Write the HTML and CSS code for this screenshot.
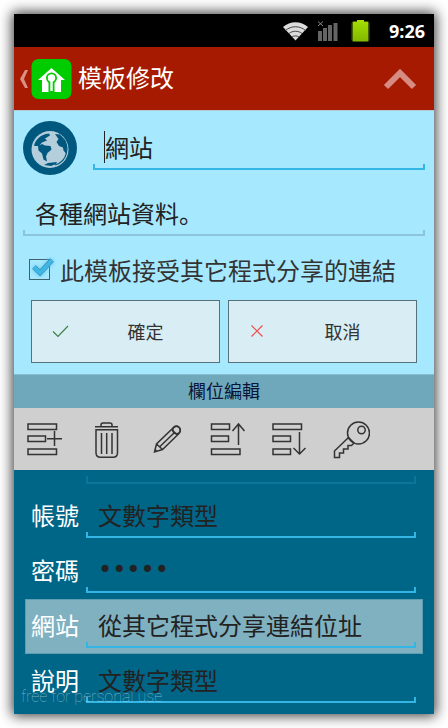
FILE: index.html
```html
<!DOCTYPE html>
<html lang="zh">
<head>
<meta charset="utf-8">
<meta name="viewport" content="width=device-width, initial-scale=1">
<title>模板修改</title>
<link rel="stylesheet" href="styles.css">
</head>
<body>
<main class="screen">
  <div class="status">
    <svg class="wifi" width="29" height="24" viewBox="0 0 29 24" aria-hidden="true">
      <path d="M14.500 21.500L2 8C9 1.500 20 1.500 27 8Z" fill="#dcdcdc"/>
      <path d="M4.500 11.500C10 6.500 19 6.500 24.500 11.500M8 14.500C11.500 11.500 17.500 11.500 21 14.500M11 18C13 16.500 16 16.500 18 18" fill="none" stroke="#444" stroke-width="1"/>
    </svg>
    <svg class="signal" width="23" height="24" viewBox="0 0 23 24" aria-hidden="true">
      <path d="M2 12h4v10h-4zM7 9h4v13h-4zM12 6h4v16h-4zM17.500 4h4v18h-4z" fill="#656565"/>
      <path d="M2 2.500l5 4.500M7 2.500l-5 4.500" stroke="#888" stroke-width="1"/>
    </svg>
    <svg class="battery" width="21" height="26" viewBox="0 0 21 26" aria-hidden="true">
      <defs><linearGradient id="charge" x1="0" y1="0" x2="0" y2="1"><stop offset="0" stop-color="#a5e000"/><stop offset="1" stop-color="#83b800"/></linearGradient></defs>
      <rect x="1.500" y="3" width="18" height="21" rx="3" fill="#466000"/>
      <path d="M7 2h7v2h4v19h-15v-19h4z" fill="url(#charge)"/>
    </svg>
    <time>9:26</time>
  </div>

  <header class="appbar">
    <button class="back" type="button" aria-label="返回">
      <svg width="10" height="20" viewBox="0 0 10 20" aria-hidden="true"><path d="M6 1h3L5 10l4 9H6L1 10z" fill="#d99186"/></svg>
    </button>
    <svg class="logo" width="41" height="42" viewBox="0 0 41 42" aria-hidden="true">
      <rect x=".5" y="1" width="40" height="40" rx="7" fill="#0c0"/>
      <path d="M20.500 10l13.500 12h-4v12h-19v-12h-4z" fill="#fff"/>
      <circle cx="20.500" cy="20" r="5.500" fill="#0c0"/>
      <path d="M17.500 23h6v11h-6z" fill="#0c0"/>
      <circle cx="20.500" cy="20" r="3.700" fill="#fff"/>
      <path d="M19.300 23h2.400v10h-2.400z" fill="#fff"/>
    </svg>
    <h1>模板修改</h1>
    <button class="collapse" type="button" aria-label="收合">
      <svg width="34" height="24" viewBox="0 0 34 24" aria-hidden="true"><path d="M3 20L17 6l14 14" fill="none" stroke="#d68c82" stroke-width="6"/></svg>
    </button>
  </header>

  <form class="form">
    <div class="name-row">
      <svg class="globe" width="54" height="54" viewBox="0 0 54 54" aria-hidden="true">
        <circle cx="27" cy="27" r="27" fill="#00587f"/>
        <circle cx="27" cy="28.500" r="18.500" fill="#b4cedb"/>
        <path d="M38 15.500A16.500 16.500 0 0 1 32 44" fill="none" stroke="#00587f" stroke-width="1.200"/>
        <path d="M11 25C12 19 17 13.500 26 12.500l1 2-5 3 2 2-5 2-3 3.500z" fill="#00587f"/>
        <path d="M15 25l4-2 3 1.500 5.500.5 1 3.500-4 3.500-1.500 3.500 1 5-3.500-2-1.500-6-3.500-3z" fill="#00587f"/>
        <path d="M32 13l5 .5 5 6 2 7-1 6-2.500-3-.5-3-4-1.500-2.500-4 2-3z" fill="#00587f"/>
        <path d="M21 44l4-2 9-1-1 2-5 2z" fill="#00587f"/>
      </svg>
      <input class="field active caret" type="text" aria-label="名稱" value="網站">
    </div>
    <input class="field idle" type="text" aria-label="說明" value="各種網站資料。">
    <label class="share">
      <span class="tick">
        <input type="checkbox" checked>
        <svg width="26" height="24" viewBox="0 0 26 24" aria-hidden="true"><path d="M4 10l6 6L22 3" fill="none" stroke="#3a83a3" stroke-width="5"/><path d="M4 10l6 6L22 3" fill="none" stroke="#3eb7e6" stroke-width="4"/></svg>
      </span>
      此模板接受其它程式分享的連結
    </label>
    <div class="actions">
      <button type="button">
        <svg width="18" height="18" viewBox="0 0 18 18" aria-hidden="true"><path d="M1 9.500l5 5L16 4" fill="none" stroke="#3d8048" stroke-width="1.200"/></svg>
        <span>確定</span>
      </button>
      <button type="button">
        <svg width="18" height="18" viewBox="0 0 18 18" aria-hidden="true"><path d="M2.500 3.500l11 11M13.500 3.500l-11 11" stroke="#ee4a4a" stroke-width="1.200"/></svg>
        <span>取消</span>
      </button>
    </div>
  </form>

  <h2 class="section">欄位編輯</h2>
  <div class="toolbar">
    <button type="button" aria-label="新增">
      <svg width="41" height="40" viewBox="0 0 41 40" aria-hidden="true"><path d="M4 5h28.500v5.500H4zM4 17h17.500v5.500H4zM4 30h28.500v5.500H4zM23 19.700h15M30.500 12v15"/></svg>
    </button>
    <button type="button" aria-label="刪除">
      <svg width="41" height="40" viewBox="0 0 41 40" aria-hidden="true"><path d="M10 7.700h23M16 7.500v-1.500q0-2 2-2h7q2 0 2 2v1.500M11 10.700h21.500v23q0 4.500-4.500 4.500h-12.500q-4.500 0-4.500-4.500zM16.500 14v21M21.700 14v21M27 14v21"/></svg>
    </button>
    <button type="button" aria-label="編輯">
      <svg width="41" height="40" viewBox="0 0 41 40" aria-hidden="true"><path d="M8.500 33l2-8 16-15.500c1.500-2 4-3 6-1.500l1 1c1.500 2 1 4.500-1 6l-16 15.500zM10.500 25l6 5.500M25.500 10.500l6.500 6M14 27.500l15-14.500M9 30.500l2 2"/><circle cx="30.500" cy="11" r="3.700"/></svg>
    </button>
    <button type="button" aria-label="上移">
      <svg width="41" height="40" viewBox="0 0 41 40" aria-hidden="true"><path d="M4.500 5h18v5.500h-18zM4.500 17h17v5.500h-17zM4.500 30h28.500v5.500h-28.500zM31.500 26v-21M25.500 12l6-7 6 7"/></svg>
    </button>
    <button type="button" aria-label="下移">
      <svg width="41" height="40" viewBox="0 0 41 40" aria-hidden="true"><path d="M5 5h28.500v5.500H5zM5 17h17.500v5.500H5zM5 30h17.500v5.500H5zM31.500 13v22M25.500 29l6 6 6-6"/></svg>
    </button>
    <button type="button" aria-label="密碼">
      <svg width="41" height="40" viewBox="0 0 41 40" aria-hidden="true"><circle cx="29.500" cy="14" r="11"/><circle cx="32.500" cy="11" r="3.700"/><path d="M19.500 18.500l6 6M19.500 18.500L5.500 32v6.500h5v-4.500h4v-4h4.500v-3.500h3.500l3-3"/></svg>
    </button>
  </div>

  <section class="list">
    <div class="row peek"></div>
    <div class="row"><label for="f1">帳號</label><input id="f1" class="field active" type="text" value="文數字類型"></div>
    <div class="row"><label for="f2">密碼</label><input id="f2" class="field active" type="password" value="12345"></div>
    <div class="row selected"><label for="f3">網站</label><input id="f3" class="field active" type="text" value="從其它程式分享連結位址"></div>
    <div class="row"><label for="f4">說明</label><input id="f4" class="field active" type="text" value="文數字類型"></div>
    <span class="watermark">free for personal use</span>
  </section>
</main>
</body>
</html>
```
FILE: styles.css
```css
* { box-sizing: border-box; }

body {
  margin: 0;
  padding: 14px;
  background: #fff;
  color: #333;
  font-family: Roboto, "Noto Sans CJK SC", sans-serif;
  font-size: 24px;
}

h1, h2 { margin: 0; font-weight: 400; }

button {
  padding: 0;
  border: 0;
  background: none;
  color: inherit;
  font: inherit;
}

svg { display: block; flex: none; }

.screen { box-shadow: 0 0 12px 2px rgba(0, 0, 0, 0.75); }

.status {
  display: flex;
  align-items: center;
  justify-content: flex-end;
  height: 33px;
  padding-right: 9px;
  background: #000;
}
.wifi { margin-right: 6px; }
.signal { margin-right: 11px; }
.battery { margin-right: 18px; }
.status time {
  color: #fff;
  font: 700 18px/24px "Open Sans", sans-serif;
}

.appbar {
  display: flex;
  align-items: center;
  height: 63px;
  padding: 0 17px 0 5px;
  background: #a51a00;
}
.logo { margin: 0 6px 0 2px; }
.appbar h1 { flex: 1; color: #fff; font-size: 24px; line-height: 36px; }

.form {
  padding: 10px 9px 11px;
  border-top: 1px solid #b5c9d4;
  background: #a6e9ff;
}
.name-row {
  display: flex;
  align-items: center;
  gap: 16px;
  margin-bottom: 17px;
}

.field {
  --line: #33b5e5;
  display: block;
  flex: 1;
  min-width: 0;
  width: 100%;
  height: 44px;
  padding: 0 12px 3px;
  border: 0;
  outline: 0;
  border-radius: 0;
  color: #222;
  font: inherit;
  background:
    linear-gradient(var(--line), var(--line)) left bottom / 100% 2px no-repeat,
    linear-gradient(var(--line), var(--line)) left bottom / 2px 6px no-repeat,
    linear-gradient(var(--line), var(--line)) right bottom / 2px 6px no-repeat;
}
.field[type="password"] { font-family: "DejaVu Sans", sans-serif; }
.field.idle { --line: #8cc5d9; }
.field.caret {
  background:
    linear-gradient(#222, #222) 11px 5px / 1px 32px no-repeat,
    linear-gradient(var(--line), var(--line)) left bottom / 100% 2px no-repeat,
    linear-gradient(var(--line), var(--line)) left bottom / 2px 6px no-repeat,
    linear-gradient(var(--line), var(--line)) right bottom / 2px 6px no-repeat;
}

.share {
  display: flex;
  align-items: center;
  gap: 10px;
  height: 36px;
  margin: 15px 0 13px 6px;
  white-space: nowrap;
}
.tick { position: relative; }
.tick input {
  display: block;
  appearance: none;
  width: 21px;
  height: 21px;
  margin: 0;
  border: 1px solid #40606b;
}
.tick svg {
  position: absolute;
  left: 1px;
  top: -2px;
  filter: drop-shadow(0 0 2px #5cc8f0);
}

.actions {
  display: grid;
  grid-template-columns: 1fr 1fr;
  gap: 8px;
  padding: 0 8px;
}
.actions button {
  display: flex;
  align-items: center;
  height: 63px;
  padding: 0 20px 2px;
  border: 1px solid #56717a;
  background: #d9edf4;
  font-size: 18px;
}
.actions span { flex: 1; padding-left: 22px; text-align: center; }

.section {
  border-top: 1px solid #86bfd2;
  background: #6fa8bb;
  color: #0a1437;
  font-size: 18px;
  line-height: 33px;
  text-align: center;
}

.toolbar {
  display: flex;
  height: 62px;
  background: #cfcfcf;
}
.toolbar button { width: 61px; }
.toolbar svg {
  margin: 0 auto;
  fill: none;
  stroke: #333;
  stroke-width: 1.5;
}

.list {
  position: relative;
  padding: 0 11px 5px;
  background: #006688;
}
.row {
  display: flex;
  align-items: center;
  height: 55px;
  padding: 0 7px 1px 6px;
}
.row label {
  width: 55px;
  padding-bottom: 3px;
  color: #fff;
  white-space: nowrap;
}
.row.selected { background: #80b1c1; box-shadow: inset 0 0 0 1px #5f9db2; }
.row.peek {
  height: 19px;
  padding: 6px 7px 6px 6px;
}
.row.peek::before {
  content: "";
  width: 55px;
}
.row.peek::after {
  content: "";
  flex: 1;
  height: 6px;
  border: solid #0b7699;
  border-width: 0 2px 2px;
}
.watermark {
  position: absolute;
  left: 7px;
  bottom: 5px;
  color: rgba(190, 220, 228, 0.65);
  font-size: 16px;
  font-weight: 100;
  line-height: 24px;
}
```
